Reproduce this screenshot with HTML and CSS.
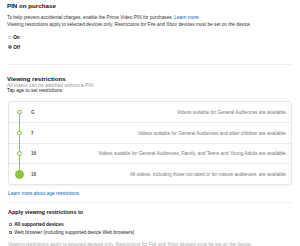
FILE: index.html
```html
<!DOCTYPE html>
<html lang="en">
<head>
    <meta charset="UTF-8">
    <meta name="viewport" content="width=device-width, initial-scale=1.0">
    <title>Parental Controls</title>
    <link rel="stylesheet" href="styles.css">
</head>
<body>
    <div class="settings">
        <section class="pin-section">
            <h2>PIN on purchase</h2>
            <p class="note">To help prevent accidental charges, enable the Prime Video PIN for purchases. <a href="#">Learn more</a></p>
            <p class="note">Viewing restrictions apply to selected devices only. Restrictions for Fire and Xbox devices must be set on the device.</p>
            <div class="radio-group">
                <label class="radio"><span class="radio-mark"></span>On</label>
                <label class="radio checked"><span class="radio-mark"></span>Off</label>
            </div>
        </section>

        <hr class="divider">

        <section class="restrictions">
            <h2>Viewing restrictions</h2>
            <p class="muted">All videos can be watched without a PIN</p>
            <p class="hint">Tap age to set restrictions</p>
            <div class="age-table">
                <div class="age-row first">
                    <div class="rail"><span class="dot"></span></div>
                    <span class="age">G</span>
                    <span class="desc">Videos suitable for General Audiences are available.</span>
                </div>
                <div class="age-row">
                    <div class="rail"><span class="dot"></span></div>
                    <span class="age">7</span>
                    <span class="desc">Videos suitable for General Audiences and older children are available.</span>
                </div>
                <div class="age-row">
                    <div class="rail"><span class="dot"></span></div>
                    <span class="age">16</span>
                    <span class="desc">Videos suitable for General Audiences, Family, and Teens and Young Adults are available.</span>
                </div>
                <div class="age-row last">
                    <div class="rail"><span class="dot selected"></span></div>
                    <span class="age">18</span>
                    <span class="desc">All videos, including those not rated or for mature audiences, are available.</span>
                </div>
            </div>
            <a class="more-link" href="#">Learn more about age restrictions</a>
        </section>

        <hr class="divider">

        <section class="devices">
            <h3>Apply viewing restrictions to</h3>
            <label class="check bold"><span class="check-box">&#10003;</span>All supported devices</label>
            <label class="check"><span class="check-box">&#10003;</span>Web browser (including supported device Web browsers)</label>
            <p class="muted footnote">Viewing restrictions apply to selected devices only. Restrictions for Fire and Xbox devices must be set on the device.</p>
        </section>
    </div>
</body>
</html>
```

FILE: styles.css
```css
body {
    margin: 0;
    background-color: #fff;
    font-family: "Liberation Sans", Arial, sans-serif;
    color: #333;
}
.settings {
    padding: 2px 8px 0 7px;
}
h2 {
    margin: 0;
    font-size: 6.2px;
    line-height: 8px;
    font-weight: bold;
    color: #111;
}
h3 {
    margin: 0;
    font-size: 5.5px;
    line-height: 8px;
    font-weight: bold;
    color: #111;
}
p {
    margin: 0;
}
a {
    color: #0066c0;
    text-decoration: none;
}
.note {
    font-size: 4.75px;
    line-height: 7px;
    color: #333;
}
.pin-section h2 {
    margin-bottom: 3.5px;
}
.radio-group {
    margin-top: 5.5px;
}
.radio {
    display: flex;
    align-items: center;
    height: 9.4px;
    font-size: 4.7px;
    font-weight: bold;
    color: #111;
}
.radio-mark {
    width: 3.6px;
    height: 3.6px;
    border: 0.6px solid #bbb;
    border-radius: 50%;
    margin: 0 1.6px 0 1px;
    box-sizing: border-box;
    display: flex;
    align-items: center;
    justify-content: center;
}
.radio.checked .radio-mark {
    border-color: #777;
}
.radio.checked .radio-mark::after {
    content: "";
    width: 1.6px;
    height: 1.6px;
    border-radius: 50%;
    background: #666;
}
.divider {
    border: none;
    border-top: 1px solid #efefef;
    margin: 12.5px 0 0 1px;
}
.restrictions {
    padding-left: 1px;
}
.restrictions h2 {
    margin-top: 9.5px;
    margin-left: -1px;
}
.muted {
    font-size: 4.85px;
    line-height: 5.5px;
    color: #999;
}
.restrictions .muted {
    margin-left: -1px;
}
.hint {
    font-size: 4.85px;
    line-height: 5.5px;
    color: #222;
    margin-left: -1px;
}
.age-table {
    margin-top: 7px;
    border: 1px solid #e6e6e6;
    border-radius: 3px;
    box-shadow: 0 1px 2px rgba(0, 0, 0, 0.06);
}
.age-row {
    display: flex;
    align-items: center;
    height: 20.5px;
    border-top: 1px solid #ebebeb;
    box-sizing: border-box;
}
.age-row.first {
    border-top: none;
}
.rail {
    position: relative;
    width: 21px;
    height: 100%;
    flex: none;
    display: flex;
    align-items: center;
    justify-content: center;
}
.rail::before,
.rail::after {
    content: "";
    position: absolute;
    left: 50%;
    width: 1px;
    margin-left: -0.5px;
    background: #8cc540;
}
.rail::before {
    top: -1px;
    bottom: 50%;
}
.rail::after {
    top: 50%;
    bottom: 0;
}
.first .rail::before,
.last .rail::after {
    display: none;
}
.dot {
    position: relative;
    z-index: 1;
    width: 4.6px;
    height: 4.6px;
    border: 1px solid #8cc540;
    border-radius: 50%;
    background: #fff;
    box-sizing: border-box;
}
.dot.selected {
    width: 9px;
    height: 9px;
    background: #8cc540;
}
.age {
    width: 24px;
    margin-left: 1px;
    font-size: 4.6px;
    font-weight: bold;
    color: #555;
}
.desc {
    flex: 1;
    text-align: right;
    padding-right: 4px;
    font-size: 4.75px;
    color: #777;
}
.more-link {
    display: block;
    margin-top: 6.5px;
    font-size: 4.75px;
    line-height: 6px;
}
.restrictions + .divider {
    margin-top: 4.5px;
}
.devices {
    padding-left: 1px;
}
.devices h3 {
    margin-top: 5.5px;
}
.check {
    display: flex;
    align-items: center;
    height: 8px;
    font-size: 4.75px;
    color: #222;
}
.check:first-of-type {
    margin-top: 4px;
}
.check.bold {
    font-weight: bold;
    color: #111;
}
.check-box {
    width: 3.4px;
    height: 3.4px;
    border: 0.6px solid #888;
    border-radius: 0.5px;
    margin: 0 1.8px 0 1px;
    box-sizing: border-box;
    font-size: 3px;
    line-height: 2.4px;
    text-align: center;
    color: #444;
    font-weight: bold;
}
.footnote {
    margin-top: 6px;
    font-size: 4.75px;
    color: #aaa;
}
```
